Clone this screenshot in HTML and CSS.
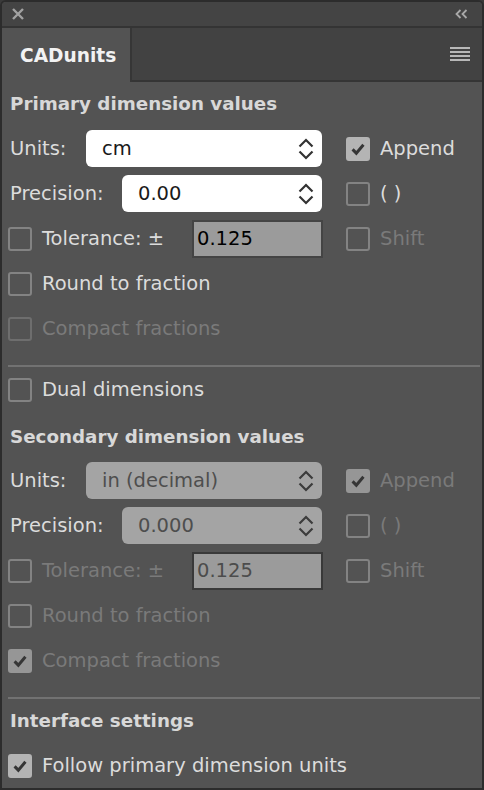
FILE: index.html
```html
<!DOCTYPE html>
<html>
<head>
<meta charset="utf-8">
<link rel="stylesheet" href="styles.css">
</head>
<body>
<div class="panel">
  <div class="titlebar">
    <svg class="close" width="12" height="12" viewBox="0 0 12 12"><path d="M1 1 L11 11 M11 1 L1 11" /></svg>
    <svg class="collapse" width="13" height="10" viewBox="0 0 13 10"><path d="M5.5 1 L1.5 5 L5.5 9 M11.5 1 L7.5 5 L11.5 9" /></svg>
  </div>
  <div class="tabrow">
    <div class="tab">CADunits</div>
    <div class="tabfill">
      <svg class="menu" width="20" height="14" viewBox="0 0 20 14"><path d="M0 1 H20 M0 5 H20 M0 9 H20 M0 13 H20" /></svg>
    </div>
  </div>
  <div class="content">
    <div class="heading">Primary dimension values</div>

    <div class="row">
      <div class="left">
        <span class="lbl">Units:</span>
        <div class="select w-units"><span>cm</span><svg class="chev" width="16" height="22" viewBox="0 0 16 22"><path d="M1.5 8.5 L8 2 L14.5 8.5 M1.5 13.5 L8 20 L14.5 13.5" /></svg></div>
      </div>
      <div class="right"><span class="cb checked"><svg viewBox="0 0 24 24"><path d="M5.5 12.5 L10 17 L18.5 7" /></svg></span><span class="txt">Append</span></div>
    </div>

    <div class="row">
      <div class="left">
        <span class="lbl">Precision:</span>
        <div class="select w-prec"><span>0.00</span><svg class="chev" width="16" height="22" viewBox="0 0 16 22"><path d="M1.5 8.5 L8 2 L14.5 8.5 M1.5 13.5 L8 20 L14.5 13.5" /></svg></div>
      </div>
      <div class="right"><span class="cb"></span><span class="txt">( )</span></div>
    </div>

    <div class="row">
      <div class="left">
        <div class="check"><span class="cb"></span><span class="txt">Tolerance: ±</span></div>
        <div class="field">0.125</div>
      </div>
      <div class="right"><span class="cb"></span><span class="txt dis">Shift</span></div>
    </div>

    <div class="row">
      <div class="check"><span class="cb"></span><span class="txt">Round to fraction</span></div>
    </div>

    <div class="row">
      <div class="check"><span class="cb dis"></span><span class="txt dis">Compact fractions</span></div>
    </div>

    <div class="sep"></div>

    <div class="row">
      <div class="check"><span class="cb"></span><span class="txt">Dual dimensions</span></div>
    </div>

    <div class="heading h2">Secondary dimension values</div>

    <div class="row">
      <div class="left">
        <span class="lbl">Units:</span>
        <div class="select w-units disabled"><span>in (decimal)</span><svg class="chev" width="16" height="22" viewBox="0 0 16 22"><path d="M1.5 8.5 L8 2 L14.5 8.5 M1.5 13.5 L8 20 L14.5 13.5" /></svg></div>
      </div>
      <div class="right"><span class="cb checked dis"><svg viewBox="0 0 24 24"><path d="M5.5 12.5 L10 17 L18.5 7" /></svg></span><span class="txt dis">Append</span></div>
    </div>

    <div class="row">
      <div class="left">
        <span class="lbl">Precision:</span>
        <div class="select w-prec disabled"><span>0.000</span><svg class="chev" width="16" height="22" viewBox="0 0 16 22"><path d="M1.5 8.5 L8 2 L14.5 8.5 M1.5 13.5 L8 20 L14.5 13.5" /></svg></div>
      </div>
      <div class="right"><span class="cb"></span><span class="txt dis">( )</span></div>
    </div>

    <div class="row">
      <div class="left">
        <div class="check"><span class="cb"></span><span class="txt dis">Tolerance: ±</span></div>
        <div class="field disabled">0.125</div>
      </div>
      <div class="right"><span class="cb"></span><span class="txt dis">Shift</span></div>
    </div>

    <div class="row">
      <div class="check"><span class="cb"></span><span class="txt dis">Round to fraction</span></div>
    </div>

    <div class="row">
      <div class="check"><span class="cb checked dis"><svg viewBox="0 0 24 24"><path d="M5.5 12.5 L10 17 L18.5 7" /></svg></span><span class="txt dis">Compact fractions</span></div>
    </div>

    <div class="sep"></div>

    <div class="heading h3">Interface settings</div>

    <div class="row">
      <div class="check"><span class="cb checked"><svg viewBox="0 0 24 24"><path d="M5.5 12.5 L10 17 L18.5 7" /></svg></span><span class="txt">Follow primary dimension units</span></div>
    </div>
  </div>
</div>
</body>
</html>
```

FILE: styles.css
```css
html, body {
  margin: 0;
  padding: 0;
  background: #3a3a3a;
}
body {
  font-family: "DejaVu Sans", "Liberation Sans", sans-serif;
  font-size: 19.5px;
  line-height: 1;
  color: #dcdcdc;
}
.panel {
  width: 484px;
  height: 790px;
  box-sizing: border-box;
  border: 2px solid #2c2c2c;
  border-radius: 6px 6px 0 0;
  background: #535353;
  display: flex;
  flex-direction: column;
  overflow: hidden;
}
.titlebar {
  height: 24px;
  background: #444444;
  border-bottom: 2px solid #343434;
  display: flex;
  align-items: center;
  justify-content: space-between;
  padding: 0 14px 0 10px;
}
.close path {
  stroke: #a2a2a2;
  stroke-width: 2.4;
  fill: none;
}
.collapse path {
  stroke: #a8a8a8;
  stroke-width: 1.8;
  fill: none;
}
.tabrow {
  height: 54px;
  display: flex;
  background: #424242;
}
.tab {
  width: 130px;
  box-sizing: border-box;
  background: #535353;
  border-right: 2px solid #363636;
  color: #f2f2f2;
  font-weight: bold;
  font-size: 18.6px;
  display: flex;
  align-items: center;
  padding-left: 18px;
  padding-top: 2px;
}
.tabfill {
  flex: 1;
  border-bottom: 2px solid #353535;
  display: flex;
  align-items: center;
  justify-content: flex-end;
  padding-right: 12px;
}
.menu path {
  stroke: #b8b8b8;
  stroke-width: 2.2;
  fill: none;
}
.content {
  flex: 1;
  padding: 0 4px 0 6px;
}
.heading {
  height: 44px;
  display: flex;
  align-items: center;
  padding-left: 2px;
  font-weight: bold;
  font-size: 18.3px;
  color: #d8d8d8;
}
.h2 {
  height: 46px;
  padding-top: 4px;
  box-sizing: border-box;
}
.h3 {
  height: 44px;
}
.row {
  height: 45px;
  display: flex;
  align-items: center;
}
.left {
  width: 314px;
  display: flex;
  align-items: center;
  justify-content: space-between;
}
.lbl {
  padding-left: 2px;
}
.right {
  margin-left: 24px;
  display: flex;
  align-items: center;
  gap: 10px;
}
.check {
  display: flex;
  align-items: center;
  gap: 10px;
}
.cb {
  width: 24px;
  height: 24px;
  box-sizing: border-box;
  border: 2px solid #838383;
  border-radius: 3px;
  display: inline-block;
  flex: none;
}
.cb.dis {
  border-color: #6e6e6e;
}
.cb.checked {
  background: #b4b4b4;
  border-color: #b4b4b4;
}
.cb.checked.dis {
  background: #969696;
  border-color: #969696;
}
.cb svg {
  display: block;
  width: 20px;
  height: 20px;
}
.cb svg path {
  stroke: #363636;
  stroke-width: 3.6;
  fill: none;
}
.txt.dis {
  color: #7a7a7a;
}
.select {
  height: 37px;
  box-sizing: border-box;
  background: #ffffff;
  border-radius: 6px;
  display: flex;
  align-items: center;
  justify-content: space-between;
  padding: 0 8px 0 16px;
  color: #1a1a1a;
}
.w-units {
  width: 236px;
}
.w-prec {
  width: 200px;
}
.select.disabled {
  background: #a4a4a4;
  color: #4e4e4e;
}
.chev path {
  stroke: #333333;
  stroke-width: 2.2;
  fill: none;
}
.select.disabled .chev path {
  stroke: #3c3c3c;
}
.field {
  width: 131px;
  height: 38px;
  box-sizing: border-box;
  margin-right: -1px;
  background: #9b9b9b;
  border: 2px solid #444444;
  color: #000000;
  display: flex;
  align-items: center;
  padding-left: 3px;
}
.field.disabled {
  border-color: #393939;
  color: #4c4c4c;
}
.sep {
  height: 2px;
  background: #727272;
  margin: 14px 0 0 0;
  width: 472px;
}
```
